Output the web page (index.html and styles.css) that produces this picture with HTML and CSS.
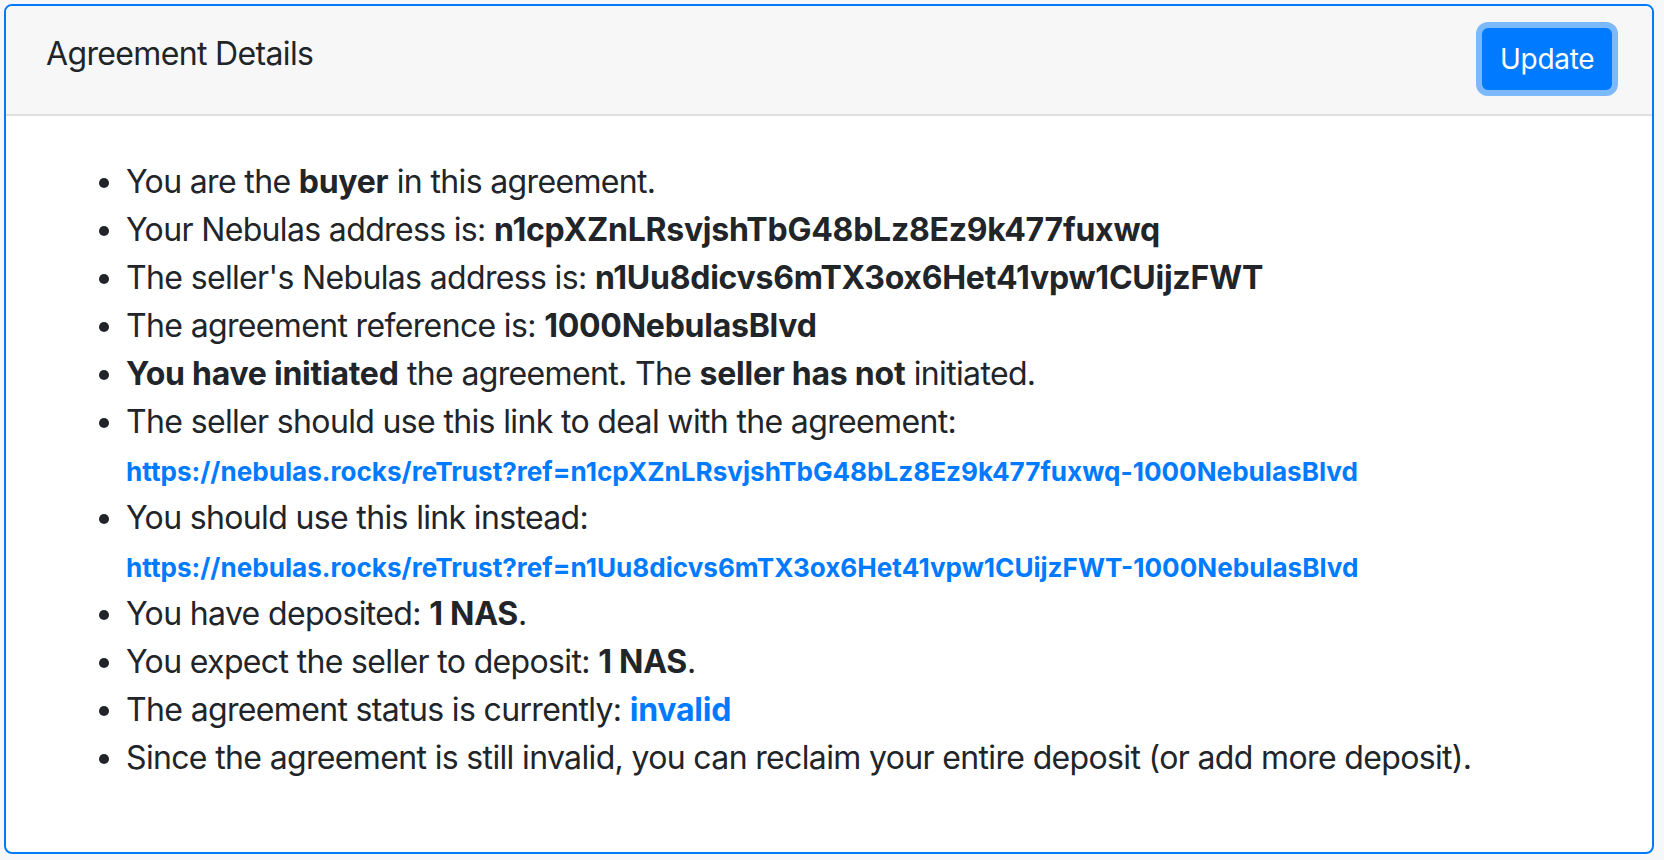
FILE: index.html
```html
<!DOCTYPE html>
<html lang="en">
<head>
<meta charset="utf-8">
<title>Agreement Details</title>
<link rel="stylesheet" href="styles.css">
</head>
<body>
<div class="card">
  <div class="card-header">
    <div class="card-title">Agreement Details</div>
    <button class="btn" type="button">Update</button>
  </div>
  <div class="card-body">
    <ul class="details">
      <li>You are the <b>buyer</b> in this agreement.</li>
      <li>Your Nebulas address is: <b>n1cpXZnLRsvjshTbG48bLz8Ez9k477fuxwq</b></li>
      <li>The seller's Nebulas address is: <b>n1Uu8dicvs6mTX3ox6Het41vpw1CUijzFWT</b></li>
      <li>The agreement reference is: <b>1000NebulasBlvd</b></li>
      <li><b>You have initiated</b> the agreement. The <b>seller has not</b> initiated.</li>
      <li>The seller should use this link to deal with the agreement:<br><a class="link" href="#">https://nebulas.rocks/reTrust?ref=n1cpXZnLRsvjshTbG48bLz8Ez9k477fuxwq-1000NebulasBlvd</a></li>
      <li>You should use this link instead:<br><a class="link" href="#">https://nebulas.rocks/reTrust?ref=n1Uu8dicvs6mTX3ox6Het41vpw1CUijzFWT-1000NebulasBlvd</a></li>
      <li>You have deposited: <b>1 NAS</b>.</li>
      <li>You expect the seller to deposit: <b>1 NAS</b>.</li>
      <li>The agreement status is currently: <b class="status">invalid</b></li>
      <li>Since the agreement is still invalid, you can reclaim your entire deposit (or add more deposit).</li>
    </ul>
  </div>
</div>
</body>
</html>
```

FILE: styles.css
```css
html, body {
  margin: 0;
  padding: 0;
}
body {
  background: #f6f7f9;
  font-family: Inter, "Noto Sans", "Liberation Sans", sans-serif;
  color: #212529;
  font-size: 32px;
  line-height: 1.5;
  letter-spacing: -0.65px;
  padding: 4px 10px 6px 4px;
}
.card {
  background: #fff;
  border: 2px solid #007bff;
  border-radius: 8px;
  overflow: hidden;
}
.card-header {
  display: flex;
  justify-content: space-between;
  align-items: flex-start;
  background: #f7f7f7;
  border-bottom: 2px solid #dfdfdf;
  padding: 22px 40px 24px 40px;
}
.card-title {
  font-size: 32px;
  line-height: 48px;
  padding-top: 2px;
}
.btn {
  font-family: inherit;
  font-size: 28px;
  line-height: 42px;
  letter-spacing: -0.3px;
  color: #fff;
  background: #007bff;
  border: 2px solid #007bff;
  border-radius: 6px;
  padding: 8px 16px;
  height: 62px;
  width: 130px;
  box-shadow: 0 0 0 6px rgba(0, 123, 255, 0.5);
  cursor: pointer;
}
.card-body {
  padding: 42px 40px 38px;
}
.details {
  margin: 0 0 32px;
  padding-left: 80px;
}
b {
  font-weight: 700;
  letter-spacing: -0.25px;
}
.link {
  font-size: 26.1px;
  font-weight: 700;
  letter-spacing: 0;
  color: #007bff;
  text-decoration: none;
}
.status {
  color: #007bff;
}
```
